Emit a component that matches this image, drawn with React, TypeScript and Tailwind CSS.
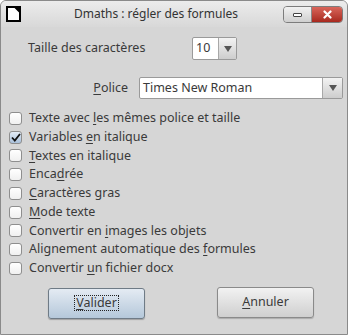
import type { ReactNode } from 'react'

const font = { fontFamily: '"Noto Sans", "Open Sans", sans-serif' }

function U({ children }: { children: ReactNode }) {
  return <span className="underline underline-offset-2">{children}</span>
}

function Arrow() {
  return (
    <svg width="8" height="6" viewBox="0 0 8 6">
      <path d="M0 0 H8 L4 6 Z" fill="#555" />
    </svg>
  )
}

function Checkbox({ checked }: { checked?: boolean }) {
  return (
    <span
      className={`flex h-[13px] w-[13px] shrink-0 items-center justify-center rounded-[3px] border border-[#8e8e8e] ${
        checked ? 'bg-gradient-to-b from-[#e3ecf6] to-[#a9c0da]' : 'bg-gradient-to-b from-[#ffffff] to-[#f0f0f0]'
      }`}
    >
      {checked && (
        <svg width="10" height="9" viewBox="0 0 10 9">
          <path d="M1 4.5 L3.8 7.5 L9 1" fill="none" stroke="#111" strokeWidth="1.8" />
        </svg>
      )}
    </span>
  )
}

const options: { label: ReactNode; checked?: boolean }[] = [
  { label: <>Texte avec <U>l</U>es mêmes police et taille</> },
  { label: <>Variables <U>e</U>n italique</>, checked: true },
  { label: <><U>T</U>extes en italique</> },
  { label: <>Enca<U>d</U>rée</> },
  { label: <><U>C</U>aractères gras</> },
  { label: <><U>M</U>ode texte</> },
  { label: <>Convertir en <U>i</U>mages les objets</> },
  { label: <>Alignement automatique des <U>f</U>ormules</> },
  { label: <>Convertir <U>u</U>n fichier docx</> },
]

export default function App() {
  return (
    <div
      style={font}
      className="flex h-[335px] w-[348px] flex-col overflow-hidden rounded-t-[6px] border border-[#8a8a8a] bg-[#d6d6d6] text-[12.5px] text-[#3a3a3a]"
    >
      <div className="flex h-[26px] shrink-0 items-center bg-gradient-to-b from-[#ececec] to-[#d8d8d8] pl-[5px] pr-[4px]">
        <svg width="15" height="16" viewBox="0 0 15 16" className="shrink-0">
          <path d="M1 1 H9 L14 6 V15 H1 Z" fill="#fff" stroke="#000" strokeWidth="2" />
          <path d="M8 0 H15 V7 Z" fill="#000" />
        </svg>
        <div className="flex-1 pl-[8px] text-center text-[12px] text-[#333]">Dmaths : régler des formules</div>
        <div className="flex h-[17px] overflow-hidden rounded-[4px] border border-[#7c7c7c]">
          <div className="flex w-[28px] items-center justify-center border-r border-[#8a8a8a] bg-gradient-to-b from-[#f2f2f2] to-[#cfcfcf]">
            <span className="mt-[2px] h-[4px] w-[9px] rounded-[1px] border border-[#444] bg-white" />
          </div>
          <div className="flex w-[30px] items-center justify-center bg-gradient-to-b from-[#d9655a] to-[#a8281e]">
            <svg width="9" height="9" viewBox="0 0 9 9">
              <path d="M1.5 1.5 L7.5 7.5 M7.5 1.5 L1.5 7.5" stroke="#fff" strokeWidth="2.2" strokeLinecap="round" />
            </svg>
          </div>
        </div>
      </div>

      <div className="mt-[10px] flex h-[23px] items-center pl-[27px]">
        <span className="w-[164px]">Taille des caractères</span>
        <div className="flex h-[23px] w-[45px] rounded-[2px] border border-[#9a9a9a] bg-white">
          <span className="flex flex-1 items-center pl-[3px]">10</span>
          <span className="flex w-[18px] items-center justify-center border-l border-[#a8a8a8] bg-gradient-to-b from-[#f3f3f3] to-[#cdcdcd]">
            <Arrow />
          </span>
        </div>
      </div>

      <div className="mt-[17px] flex h-[22px] items-center">
        <span className="w-[138px] pr-[11px] text-right">
          <U>P</U>olice
        </span>
        <div className="flex h-[22px] w-[204px] rounded-[2px] border border-[#9a9a9a] bg-white">
          <span className="flex flex-1 items-center pl-[3px]">Times New Roman</span>
          <span className="flex w-[20px] items-center justify-center border-l border-[#a8a8a8] bg-gradient-to-b from-[#f3f3f3] to-[#cdcdcd]">
            <Arrow />
          </span>
        </div>
      </div>

      <div className="mt-[10px] flex flex-col pl-[8px]">
        {options.map((o, i) => (
          <div key={i} className="flex h-[18.75px] items-center gap-[7px]">
            <Checkbox checked={o.checked} />
            <span>{o.label}</span>
          </div>
        ))}
      </div>

      <div className="mt-[9px] flex items-start">
        <button className="ml-[47px] mt-[1px] flex h-[31px] w-[97px] items-center justify-center rounded-[3px] border border-[#6f7b86] bg-gradient-to-b from-[#e4ebf3] to-[#b5c8da] shadow-[0_1px_1px_rgba(0,0,0,0.25)]">
          <span className="border border-dotted border-[#222] px-[1px] leading-[14px]">
            <U>V</U>alider
          </span>
        </button>
        <button className="ml-[72px] flex h-[31px] w-[97px] items-center justify-center rounded-[3px] border border-[#8a8a8a] bg-gradient-to-b from-[#f2f2f2] to-[#cfcfcf] shadow-[0_1px_1px_rgba(0,0,0,0.2)]">
          <U>A</U>nnuler
        </button>
      </div>
    </div>
  )
}
